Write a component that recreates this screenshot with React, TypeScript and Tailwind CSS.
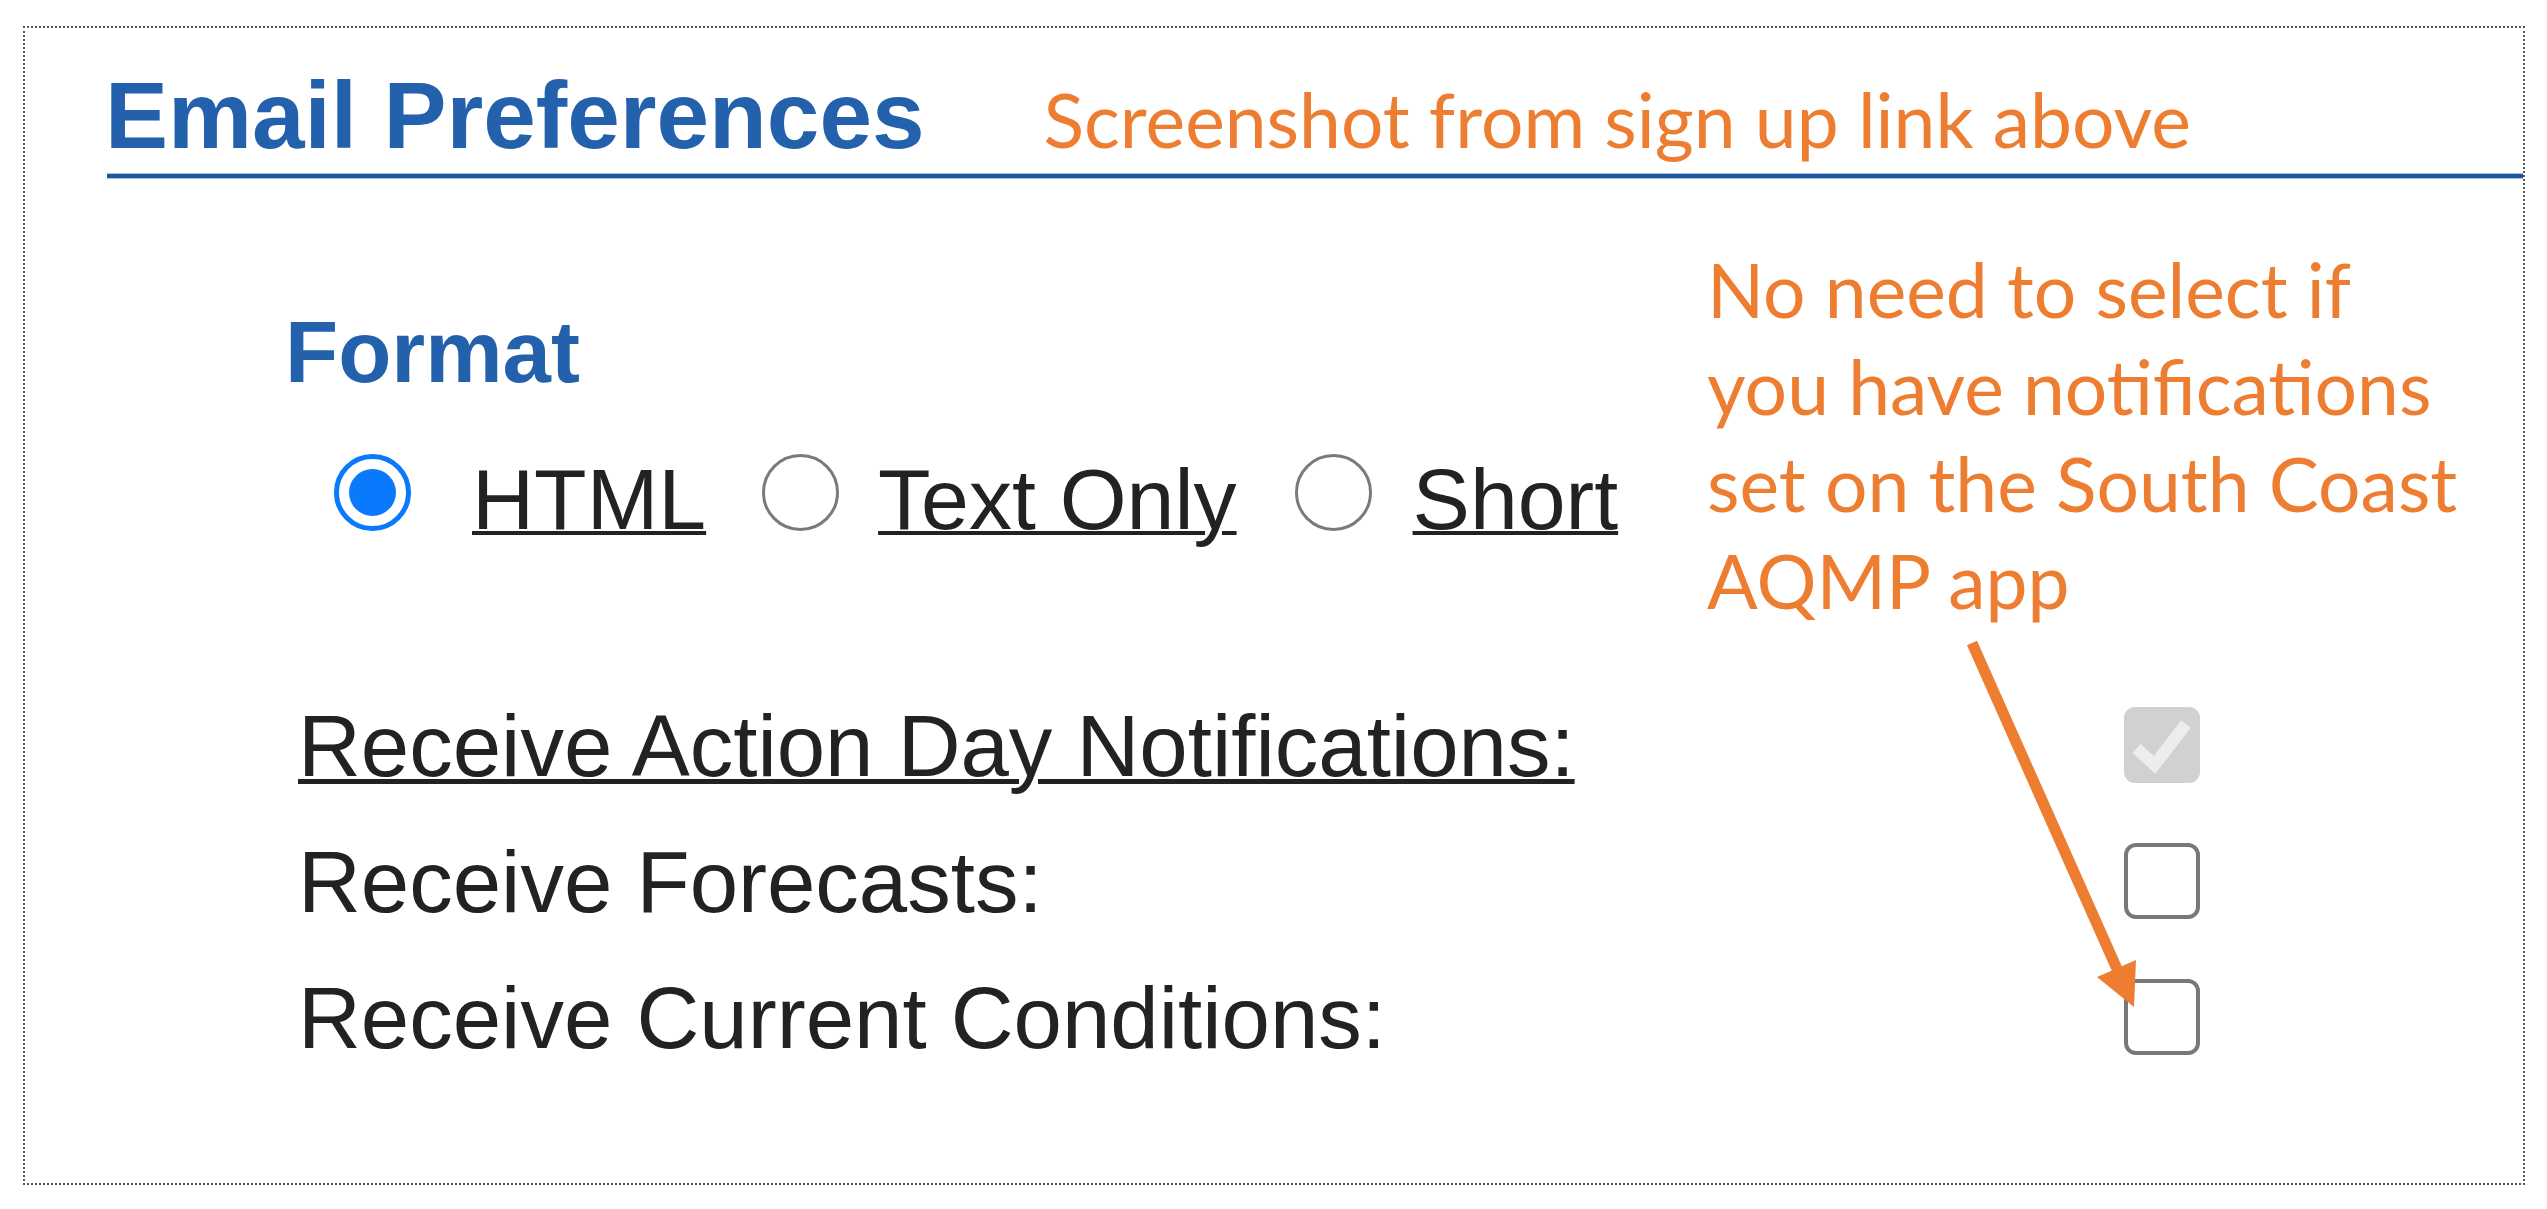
import React from "react";

const Radio = ({ checked }: { checked?: boolean }) =>
  checked ? (
    <span className="flex w-[77px] h-[77px] shrink-0 items-center justify-center rounded-full border-[5px] border-[#0b79fb] bg-white">
      <span className="block w-[47px] h-[47px] rounded-full bg-[#0b79fb]" />
    </span>
  ) : (
    <span className="block w-[77px] h-[77px] shrink-0 rounded-full border-[3px] border-[#7a7a7a] bg-white" />
  );

const Checkbox = ({ disabled }: { disabled?: boolean }) =>
  disabled ? (
    <span className="flex w-[76px] h-[76px] shrink-0 rounded-[11px] bg-[#d1d1d1]">
      <svg width="76" height="76" viewBox="0 0 76 76">
        <polyline
          points="12.5,41.5 30.5,58 62,17"
          fill="none"
          stroke="#ededed"
          strokeWidth="12"
        />
      </svg>
    </span>
  ) : (
    <span className="block w-[76px] h-[76px] shrink-0 rounded-[12px] border-[4px] border-[#787878] bg-white" />
  );

const labelRows = [
  { text: "Receive Action Day Notifications:", link: true, disabled: true },
  { text: "Receive Forecasts:", link: false, disabled: false },
  { text: "Receive Current Conditions:", link: false, disabled: false },
];

const noteLines = [
  "No need to select if",
  "you have notifications",
  "set on the South Coast",
  "AQMP app",
];

export default function App() {
  return (
    <div className="w-[2547px] h-[1209px] bg-white overflow-hidden font-['Liberation_Sans',Arial,sans-serif]">
      <div className="relative ml-[23px] mt-[26px] w-[2502px] h-[1159px] border-2 border-dotted border-[#555]">
        {/* heading */}
        <div className="flex items-baseline pt-[40px] pl-[80px]">
          <h1 className="text-[94.5px] leading-none font-bold text-[#2461ac]">
            Email Preferences
          </h1>
          <span className="ml-[119px] text-[75px] leading-none text-[#ed7d31] font-['Lato',sans-serif]">
            Screenshot from sign up link above
          </span>
        </div>
        <div className="ml-[82px] mt-[10px] h-[6px] border-y border-[#a6c0e2] bg-[#1c56a3]" />

        {/* format + note */}
        <div className="flex mt-[62px]">
          <div className="w-[1682px] pl-[260px] pt-[67px]">
            <h2 className="text-[87px] leading-none font-bold text-[#2461ac]">Format</h2>
            <div className="flex items-start mt-[59px] ml-[49px] text-[86px] leading-none text-[#222]">
              <Radio checked />
              <span className="ml-[61px] mt-[2px] underline decoration-[4px]">HTML</span>
              <span className="ml-[56px]">
                <Radio />
              </span>
              <span className="ml-[39px] mt-[2px] underline decoration-[4px]">Text Only</span>
              <span className="ml-[58px]">
                <Radio />
              </span>
              <span className="ml-[41px] mt-[2px] underline decoration-[4px]">Short</span>
            </div>
          </div>
          <div className="text-[75px] leading-[97px] text-[#ed7d31] font-['Lato',sans-serif]">
            {noteLines.map((line) => (
              <div key={line}>{line}</div>
            ))}
          </div>
        </div>

        {/* notification options */}
        <div className="flex flex-col gap-[49px] mt-[73px] pl-[273px]">
          {labelRows.map((row) => (
            <div key={row.text} className="flex h-[87px] w-[1902px] items-center justify-between">
              <span
                className={`text-[87px] leading-none text-[#222] ${
                  row.link ? "underline decoration-[5px]" : ""
                }`}
              >
                {row.text}
              </span>
              <Checkbox disabled={row.disabled} />
            </div>
          ))}
        </div>

        {/* annotation arrow */}
        <svg
          className="absolute left-[1925px] top-[592px]"
          width="240"
          height="420"
          viewBox="1950 620 240 420"
        >
          <line x1="1972" y1="643" x2="2117" y2="969" stroke="#ed7d31" strokeWidth="11" />
          <polygon points="2134,1007 2097,977 2136,960" fill="#ed7d31" />
        </svg>
      </div>
    </div>
  );
}
